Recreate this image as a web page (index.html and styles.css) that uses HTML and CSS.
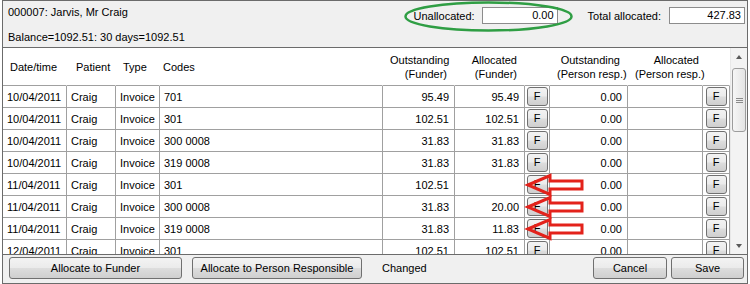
FILE: index.html
```html
<!DOCTYPE html>
<html lang="en">
<head>
  <meta charset="UTF-8">
  <title>Allocate Payment</title>
  <link rel="stylesheet" href="styles.css">
</head>
<body>
  <div class="window">
    <!-- Cabecalho com paciente e totais -->
    <div class="top">
      <div class="info">
        <div>000007: Jarvis, Mr Craig</div>
        <div class="balance">Balance=1092.51: 30 days=1092.51</div>
      </div>
      <div class="totals">
        <span class="field-label">Unallocated:</span>
        <span class="textbox">0.00</span>
        <span class="field-label total-label">Total allocated:</span>
        <span class="textbox">427.83</span>
      </div>
      <svg class="highlight" width="170" height="32" viewBox="0 0 170 32">
        <ellipse cx="85.5" cy="15.5" rx="83" ry="14" fill="none" stroke="#2f9e44" stroke-width="2.5"/>
      </svg>
    </div>

    <!-- Grelha de lancamentos -->
    <div class="grid">
      <div class="grid-body">
        <table class="ledger">
          <colgroup>
            <col class="c-date"><col class="c-patient"><col class="c-type"><col class="c-codes">
            <col class="c-money"><col class="c-alloc"><col class="c-f">
            <col class="c-person"><col class="c-palloc"><col class="c-f2">
          </colgroup>
          <thead>
            <tr>
              <th>Date/time</th>
              <th class="h-patient">Patient</th>
              <th>Type</th>
              <th class="h-codes">Codes</th>
              <th class="num">Outstanding<br>(Funder)</th>
              <th class="num">Allocated<br>(Funder)</th>
              <th></th>
              <th class="num">Outstanding<br>(Person resp.)</th>
              <th class="num h-last">Allocated<br>(Person resp.)</th>
              <th></th>
            </tr>
          </thead>
          <tbody>
            <tr>
              <td>10/04/2011</td><td>Craig</td><td>Invoice</td><td>701</td>
              <td class="num">95.49</td><td class="num">95.49</td>
              <td class="f-cell"><span class="f-btn">F</span></td>
              <td class="num">0.00</td><td></td>
              <td class="f-cell"><span class="f-btn">F</span></td>
            </tr>
            <tr>
              <td>10/04/2011</td><td>Craig</td><td>Invoice</td><td>301</td>
              <td class="num">102.51</td><td class="num">102.51</td>
              <td class="f-cell"><span class="f-btn">F</span></td>
              <td class="num">0.00</td><td></td>
              <td class="f-cell"><span class="f-btn">F</span></td>
            </tr>
            <tr>
              <td>10/04/2011</td><td>Craig</td><td>Invoice</td><td>300 0008</td>
              <td class="num">31.83</td><td class="num">31.83</td>
              <td class="f-cell"><span class="f-btn">F</span></td>
              <td class="num">0.00</td><td></td>
              <td class="f-cell"><span class="f-btn">F</span></td>
            </tr>
            <tr>
              <td>10/04/2011</td><td>Craig</td><td>Invoice</td><td>319 0008</td>
              <td class="num">31.83</td><td class="num">31.83</td>
              <td class="f-cell"><span class="f-btn">F</span></td>
              <td class="num">0.00</td><td></td>
              <td class="f-cell"><span class="f-btn">F</span></td>
            </tr>
            <tr>
              <td>11/04/2011</td><td>Craig</td><td>Invoice</td><td>301</td>
              <td class="num">102.51</td><td class="num"></td>
              <td class="f-cell marked"><span class="f-btn">F</span>
                <svg class="arrow" width="58" height="24" viewBox="0 0 58 24"><polygon points="1,12 23,2.5 23,8 55,8 55,16 23,16 23,21.5"/></svg>
              </td>
              <td class="num">0.00</td><td></td>
              <td class="f-cell"><span class="f-btn">F</span></td>
            </tr>
            <tr>
              <td>11/04/2011</td><td>Craig</td><td>Invoice</td><td>300 0008</td>
              <td class="num">31.83</td><td class="num">20.00</td>
              <td class="f-cell marked"><span class="f-btn">F</span>
                <svg class="arrow" width="58" height="24" viewBox="0 0 58 24"><polygon points="1,12 23,2.5 23,8 55,8 55,16 23,16 23,21.5"/></svg>
              </td>
              <td class="num">0.00</td><td></td>
              <td class="f-cell"><span class="f-btn">F</span></td>
            </tr>
            <tr>
              <td>11/04/2011</td><td>Craig</td><td>Invoice</td><td>319 0008</td>
              <td class="num">31.83</td><td class="num">11.83</td>
              <td class="f-cell marked"><span class="f-btn">F</span>
                <svg class="arrow" width="58" height="24" viewBox="0 0 58 24"><polygon points="1,12 23,2.5 23,8 55,8 55,16 23,16 23,21.5"/></svg>
              </td>
              <td class="num">0.00</td><td></td>
              <td class="f-cell"><span class="f-btn">F</span></td>
            </tr>
            <tr>
              <td>12/04/2011</td><td>Craig</td><td>Invoice</td><td>301</td>
              <td class="num">102.51</td><td class="num">102.51</td>
              <td class="f-cell"><span class="f-btn">F</span></td>
              <td class="num">0.00</td><td></td>
              <td class="f-cell"><span class="f-btn">F</span></td>
            </tr>
          </tbody>
        </table>
      </div>

      <div class="scrollbar">
        <div class="sb-arrow sb-up"></div>
        <div class="sb-track">
          <div class="sb-thumb">
            <svg width="7" height="5" viewBox="0 0 7 5"><path d="M0 0.5h7M0 2.5h7M0 4.5h7" stroke="#8a8a8a" stroke-width="1"/></svg>
          </div>
        </div>
        <div class="sb-arrow sb-down"></div>
      </div>
    </div>

    <!-- Barra de accoes -->
    <div class="bottom">
      <button class="btn btn-funder">Allocate to Funder</button>
      <button class="btn btn-person">Allocate to Person Responsible</button>
      <span class="status">Changed</span>
      <button class="btn btn-cancel">Cancel</button>
      <button class="btn btn-save">Save</button>
    </div>
  </div>
</body>
</html>
```

FILE: styles.css
```css
:root {
  --frame: #6b6b6b;
  --panel: #f0f0f0;
  --cell-line: #a0a0a0;
  --btn-border: #707070;
  --btn-bg: linear-gradient(#f3f3f3 0%, #ebebeb 48%, #dddddd 52%, #cfcfcf 100%);
}

* {
  margin: 0;
  padding: 0;
  box-sizing: border-box;
}

body {
  font-family: "Liberation Sans", Arial, sans-serif;
  font-size: 11px;
  color: #000;
  background-color: #fff;
}

.window {
  width: 746px;
  height: 284px;
  margin-left: 2px;
  border: 1px solid var(--frame);
  background-color: var(--panel);
  display: flex;
  flex-direction: column;
}

/* Cabecalho */
.top {
  position: relative;
  height: 46px;
  display: flex;
  justify-content: space-between;
  padding: 5px 2px 0 5px;
}

.info {
  line-height: 13px;
}

.balance {
  margin-top: 12px;
}

.totals {
  display: flex;
  align-items: center;
  height: 17px;
  margin-top: 1px;
}

.field-label {
  margin-right: 7px;
}

.total-label {
  margin-left: 30px;
  margin-right: 8px;
}

.textbox {
  width: 76px;
  height: 17px;
  line-height: 15px;
  padding-right: 3px;
  text-align: right;
  background-color: #fff;
  border: 1px solid #8c8c8c;
}

.highlight {
  position: absolute;
  left: 400px;
  top: 0;
}

/* Grelha */
.grid {
  height: 208px;
  display: flex;
  background-color: #fff;
  border-top: 1px solid var(--frame);
  border-bottom: 1px solid var(--frame);
}

.grid-body {
  width: 727px;
  overflow: hidden;
}

.ledger {
  width: 727px;
  table-layout: fixed;
  border-collapse: separate;
  border-spacing: 0;
}

.c-date { width: 64px; }
.c-patient { width: 49px; }
.c-type { width: 44px; }
.c-codes { width: 223px; }
.c-money { width: 72px; }
.c-alloc { width: 70px; }
.c-f { width: 25px; }
.c-person { width: 78px; }
.c-palloc { width: 75px; }
.c-f2 { width: 27px; }

thead tr {
  height: 38px;
}

th {
  font-weight: normal;
  text-align: left;
  vertical-align: middle;
  line-height: 14px;
  padding: 0 7px;
  border-bottom: 1px solid var(--cell-line);
  border-right: 1px solid #fff;
  white-space: nowrap;
}

th.h-patient { padding-left: 9px; }
th.h-codes { padding-left: 3px; }
th.h-last { padding-right: 3px; }

tbody tr {
  height: 22px;
}

td {
  padding: 0 4px;
  vertical-align: middle;
  white-space: nowrap;
  overflow: hidden;
  border-right: 1px solid var(--cell-line);
  border-bottom: 1px solid var(--cell-line);
}

.num {
  text-align: right;
}

td.num {
  padding-right: 5px;
}

td.f-cell {
  padding: 0;
  text-align: center;
  overflow: visible;
}

.f-btn {
  display: inline-block;
  width: 21px;
  height: 19px;
  line-height: 17px;
  text-align: center;
  vertical-align: middle;
  border: 1px solid var(--btn-border);
  border-radius: 3px;
  background: var(--btn-bg);
}

.marked {
  position: relative;
}

.arrow {
  position: absolute;
  left: 2px;
  top: 50%;
  margin-top: -12px;
  overflow: visible;
  z-index: 2;
}

.arrow polygon {
  fill: none;
  stroke: #e3221b;
  stroke-width: 3;
}

/* Barra de rolagem */
.scrollbar {
  flex: 1;
  display: flex;
  flex-direction: column;
  background-color: #f3f3f3;
  border-left: 1px solid #e8e8e8;
}

.sb-arrow {
  height: 17px;
  display: flex;
  align-items: center;
  justify-content: center;
}

.sb-up::before,
.sb-down::before {
  content: '';
  border-left: 3.5px solid transparent;
  border-right: 3.5px solid transparent;
}

.sb-up::before {
  border-bottom: 4px solid #5a5a5a;
}

.sb-down::before {
  border-top: 4px solid #5a5a5a;
}

.sb-track {
  flex: 1;
  padding: 3px 1px 0 1px;
}

.sb-thumb {
  height: 64px;
  border: 1px solid #9c9c9c;
  border-radius: 3px;
  background: linear-gradient(to right, #f6f6f6, #e4e4e4);
  display: flex;
  align-items: center;
  justify-content: center;
}

/* Botoes de baixo */
.bottom {
  flex: 1;
  display: flex;
  align-items: flex-start;
  padding: 2px 3px 0 6px;
}

.btn {
  height: 22px;
  font-family: inherit;
  font-size: 11px;
  color: #000;
  border: 1px solid var(--btn-border);
  border-radius: 3px;
  background: var(--btn-bg);
}

.btn-funder { width: 173px; }

.btn-person {
  width: 170px;
  margin-left: 10px;
}

.status {
  margin-left: 20px;
  line-height: 22px;
}

.btn-cancel {
  width: 74px;
  margin-left: auto;
}

.btn-save {
  width: 73px;
  margin-left: 4px;
}
```
